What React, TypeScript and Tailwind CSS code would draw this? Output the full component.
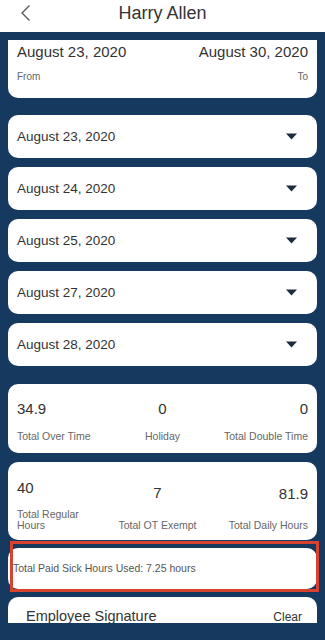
const days = ["August 23, 2020", "August 24, 2020", "August 25, 2020", "August 27, 2020", "August 28, 2020"]

function Caret() {
  return (
    <svg width="11" height="7" viewBox="0 0 11 7" className="shrink-0">
      <path d="M0 0.5 H11 L5.5 6.5 Z" fill="#1c2b3d" />
    </svg>
  )
}

export default function App() {
  return (
    <div className="flex h-[640px] w-[325px] flex-col overflow-hidden bg-[#163a5f] font-['Liberation_Sans',Arial,sans-serif] text-[#333]">
      {/* header */}
      <header className="relative flex h-[32px] shrink-0 justify-center bg-white pt-[3px]">
        <svg width="12" height="18" viewBox="0 0 12 18" className="absolute left-[20px] top-[4px]">
          <path d="M9.5 1.5 L2 9 L9.5 16.5" fill="none" stroke="#555" strokeWidth="1.3" />
        </svg>
        <h1 className="text-[18px] leading-[20px] text-[#333]">Harry Allen</h1>
      </header>

      <div className="flex h-[591px] flex-col overflow-hidden px-2">
        {/* range */}
        <div className="mt-2 flex h-[58px] shrink-0 flex-col rounded-b-[10px] bg-white px-[9px] pt-[3px]">
          <div className="flex justify-between text-[15px] leading-[18px]">
            <span>August 23, 2020</span>
            <span>August 30, 2020</span>
          </div>
          <div className="mt-[10px] flex justify-between text-[10px] leading-[12px] text-[#666]">
            <span>From</span>
            <span>To</span>
          </div>
        </div>

        {/* days */}
        <div className="mt-[17px] flex flex-col gap-[9px]">
          {days.map((d) => (
            <div key={d} className="flex h-[43px] items-center justify-between rounded-[10px] bg-white pl-[9px] pr-[20px]">
              <span className="pt-[2px] text-[13.5px] text-[#333]">{d}</span>
              <Caret />
            </div>
          ))}
        </div>

        {/* totals */}
        <div className="mt-[18px] flex h-[69px] shrink-0 flex-col rounded-[10px] bg-white px-[9px] pt-[16px]">
          <div className="flex justify-between text-[15px] leading-[18px]">
            <span className="w-[100px]">34.9</span>
            <span className="w-[60px] text-center">0</span>
            <span className="w-[100px] text-right">0</span>
          </div>
          <div className="mt-[12px] flex justify-between text-[10.5px] leading-[12px] text-[#666]">
            <span className="w-[100px] whitespace-nowrap">Total Over Time</span>
            <span className="w-[60px] text-center">Holiday</span>
            <span className="w-[100px] whitespace-nowrap text-right">Total Double Time</span>
          </div>
        </div>

        <div className="mt-[9px] flex h-[78px] shrink-0 items-end justify-between rounded-[10px] bg-white px-[9px] pb-[9px] text-[10.5px] leading-[11px] text-[#666]">
          <div className="flex w-[90px] flex-col">
            <span className="text-[15px] leading-[18px] text-[#333]">40</span>
            <span className="mt-[12px]">Total Regular</span>
            <span>Hours</span>
          </div>
          <div className="flex w-[100px] flex-col items-center">
            <span className="text-[15px] leading-[18px] text-[#333]">7</span>
            <span className="mt-[18px] whitespace-nowrap">Total OT Exempt</span>
          </div>
          <div className="flex w-[100px] flex-col items-end">
            <span className="text-[15px] leading-[18px] text-[#333]">81.9</span>
            <span className="mt-[17px] whitespace-nowrap">Total Daily Hours</span>
          </div>
        </div>

        {/* sick hours, highlighted */}
        <div className="relative mt-[8px] shrink-0">
          <div className="flex h-[41px] items-center rounded-[10px] bg-white pl-[5px]">
            <span className="text-[10.5px] text-[#555]">Total Paid Sick Hours Used: 7.25 hours</span>
          </div>
          <div className="pointer-events-none absolute left-[2px] right-[-2px] top-[-7px] bottom-[-3px] border-[3px] border-[#d8432f]" />
        </div>

        {/* signature */}
        <div className="mt-[8px] flex h-[40px] shrink-0 items-start justify-between rounded-t-[10px] bg-white pl-[18px] pr-[15px] pt-[9px]">
          <span className="text-[14.5px] text-[#333]">Employee Signature</span>
          <span className="pt-[2px] text-[12px] text-[#333]">Clear</span>
        </div>
      </div>
    </div>
  )
}
